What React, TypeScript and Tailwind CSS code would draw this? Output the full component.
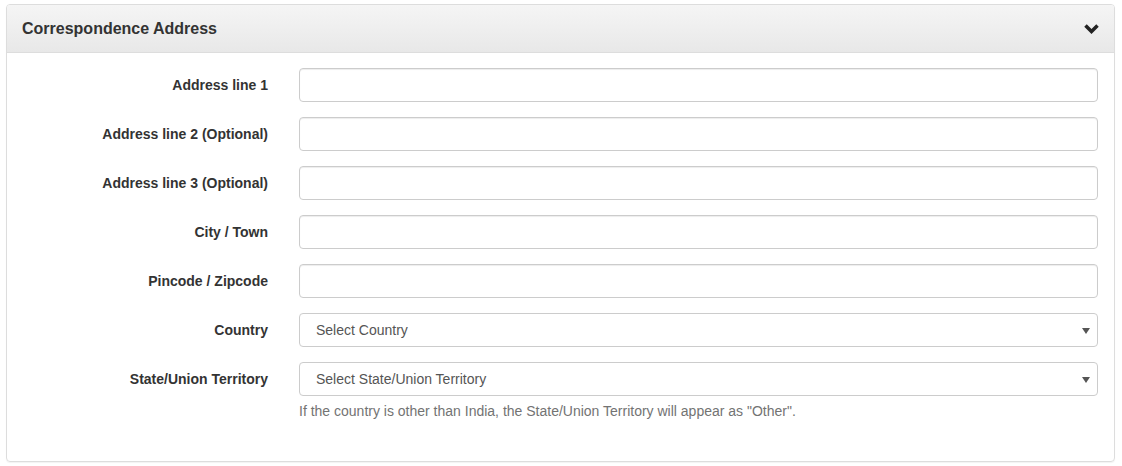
import React from "react";

const fields = [
  "Address line 1",
  "Address line 2 (Optional)",
  "Address line 3 (Optional)",
  "City / Town",
  "Pincode / Zipcode",
];

function Caret() {
  return (
    <svg width="8" height="6" viewBox="0 0 8 6" className="absolute right-[7px] top-[14px]">
      <path d="M0 0 L8 0 L4 6 Z" fill="#555" />
    </svg>
  );
}

export default function App() {
  return (
    <div className="w-[1122px] h-[466px] bg-white pl-[6px] pt-[4px] font-['Liberation_Sans',Arial,sans-serif] text-[#333]">
      <div className="w-[1109px] h-[458px] border border-[#ddd] rounded-[4px] shadow-[0_1px_1px_rgba(0,0,0,0.05)] flex flex-col overflow-hidden">
        <div className="h-[48px] shrink-0 flex items-center justify-between pl-[15px] pr-[15px] border-b border-[#ddd] bg-gradient-to-b from-[#f5f5f5] to-[#e8e8e8]">
          <span className="text-[16px] font-bold text-[#333]">Correspondence Address</span>
          <svg width="15" height="11" viewBox="0 0 15 11" className="mb-[1px]">
            <path d="M1.5 2.5 L7.5 8.5 L13.5 2.5" fill="none" stroke="#222" strokeWidth="3.5" strokeLinecap="butt" />
          </svg>
        </div>
        <div className="pt-[15px] flex flex-col gap-[15px]">
          {fields.map((f) => (
            <div key={f} className="flex items-center">
              <label className="w-[261px] text-right text-[14px] font-bold">{f}</label>
              <div className="ml-[31px] w-[799px] h-[34px] border border-[#ccc] rounded-[4px] shadow-[inset_0_1px_1px_rgba(0,0,0,0.075)]" />
            </div>
          ))}
          <div className="flex items-center">
            <label className="w-[261px] text-right text-[14px] font-bold">Country</label>
            <div className="relative ml-[31px] w-[799px] h-[34px] border border-[#ccc] rounded-[4px] flex items-center pl-[16px] text-[14px] text-[#555]">
              Select Country
              <Caret />
            </div>
          </div>
          <div className="flex items-start">
            <label className="w-[261px] h-[34px] flex items-center justify-end text-[14px] font-bold">State/Union Territory</label>
            <div className="ml-[31px] w-[799px]">
              <div className="relative h-[34px] border border-[#ccc] rounded-[4px] flex items-center pl-[16px] text-[14px] text-[#555]">
                Select State/Union Territory
                <Caret />
              </div>
              <div className="mt-[5px] text-[14px] text-[#737373]">
                If the country is other than India, the State/Union Territory will appear as "Other".
              </div>
            </div>
          </div>
        </div>
      </div>
    </div>
  );
}
